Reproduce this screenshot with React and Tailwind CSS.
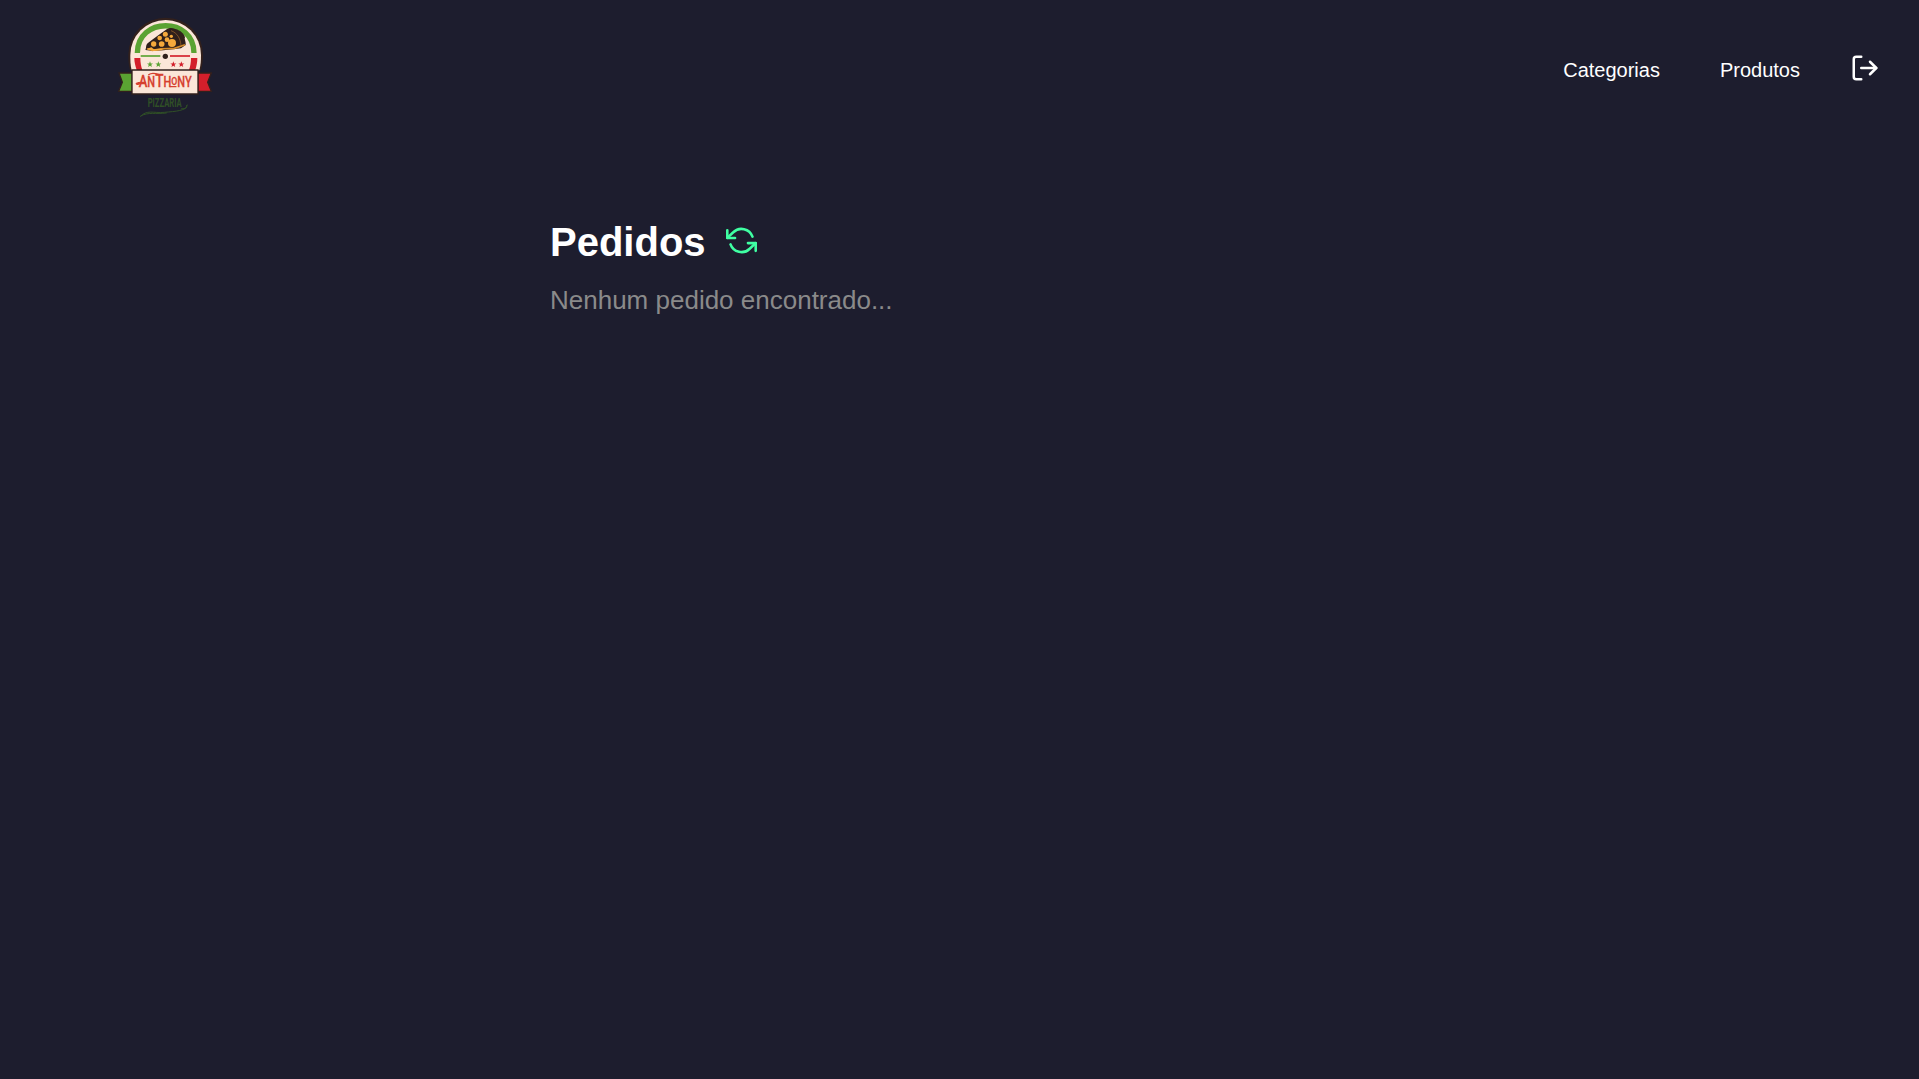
import { FiLogOut, FiRefreshCcw } from "react-icons/fi";

const STAR = "M0-9 2.4-2.8 9-2.6 3.8 1.5 5.6 8 0 4.2-5.6 8-3.8 1.5-9-2.6-2.4-2.8Z";

function Star({ x, y, className }) {
  return <path d={STAR} transform={`translate(${x} ${y})`} className={className} />;
}

function Logo() {
  return (
    <svg viewBox="0 0 330 345" className="h-[115px] w-[110px]" role="img" aria-label="Anthony Pizzaria">
      <path d="M60 181C56 165 55 153 55 134a112 111 0 0 1 224 0c0 19-2 31-6 47Z" className="fill-[#32201c]" />
      <path d="M65 181C61 165 61 153 61 135a106 105 0 0 1 212 0c0 18-1 30-5 46Z" className="fill-[#fbe6d8]" />
      <path d="M82 129C82 20 252 20 252 129" fill="none" strokeWidth="16" className="stroke-[#5aa332]" />
      <path d="M73 144H91C91 158 93 169 97 180H80C76 168 73 157 73 144Z" className="fill-[#d31f2b]" />
      <path d="M243 144H262C262 157 260 168 256 180H237C241 169 243 158 243 144Z" className="fill-[#d31f2b]" />

      <path d="M106 120C110 114 106 107 113 100C127 88 147 74 167 60C177 53 185 53 196 57C212 61 223 72 225 82C222 87 228 93 227 105L213 115L190 118L160 121L131 123Z" className="fill-[#30201b]" />
      <path d="M112 116 127 121 158 116 193 115 225 104" fill="none" strokeWidth="5" className="stroke-[#d58c2b]" />
      <path d="M116 108C132 94 153 80 180 62C193 75 203 91 205 107L160 113Z" className="fill-[#30201b]" />
      <g className="fill-[#f5a93c]">
        <circle cx="166" cy="73" r="7.5" />
        <circle cx="149" cy="84" r="7" />
        <circle cx="171" cy="89" r="7" />
        <circle cx="186" cy="99" r="12" />
        <circle cx="155" cy="102" r="8.5" />
        <circle cx="131" cy="102" r="8" />
        <circle cx="184" cy="79" r="5" />
        <path d="m109 117 15-5 8 6 20-2 10 4-30 3Z" />
      </g>
      <path d="M183 62C202 69 211 85 213 106" fill="none" strokeWidth="2" className="stroke-[#a56a2c]" />

      <path d="M92 138H151" strokeWidth="5" className="stroke-[#5aa332]" />
      <path d="M180 138H240" strokeWidth="5" className="stroke-[#d31f2b]" />
      <circle cx="166" cy="139" r="8" className="fill-[#30201b]" />
      <Star x={120} y={163} className="fill-[#5aa332]" />
      <Star x={145} y={163} className="fill-[#5aa332]" />
      <Star x={190} y={163} className="fill-[#d31f2b]" />
      <Star x={214} y={163} className="fill-[#d31f2b]" />

      <path d="M67 189H27L37 217L26 244H67Z" strokeWidth="4" className="fill-[#5aa332] stroke-[#32201c]" />
      <path d="M263 189H304L293 217L304 244H263Z" strokeWidth="4" className="fill-[#d31f2b] stroke-[#32201c]" />
      <path d="M66 180H264V252H66Z" strokeWidth="4" className="fill-[#fbe6d8] stroke-[#32201c]" />

      <text x="86" y="231" textLength="159" lengthAdjust="spacingAndGlyphs" strokeWidth="0.8" className="fill-[#d6402f] stroke-[#d6402f] font-['Roboto',sans-serif] font-medium">
        <tspan fontSize="51">A</tspan>
        <tspan fontSize="43">N</tspan>
        <tspan fontSize="53">T</tspan>
        <tspan fontSize="43">H</tspan>
        <tspan fontSize="34" dy="-7">O</tspan>
        <tspan fontSize="43" dy="7">NY</tspan>
      </text>
      <path d="M181 230H198M80 220C84 216 94 217 106 217M116 194C125 187 137 190 147 194M79 221C81 225 86 222 89 220" fill="none" strokeWidth="4" strokeLinecap="round" className="stroke-[#d6402f]" />

      <text x="113" y="291" fontSize="36" textLength="102" lengthAdjust="spacingAndGlyphs" className="fill-[#305026] font-['Roboto',sans-serif] font-bold">PIZZARIA</text>
      <path d="M92 319C110 298 130 310 163 307C197 304 229 303 232 285M92 318C115 305 137 313 169 309M215 296C229 299 231 292 230 287" fill="none" strokeWidth="3" strokeLinecap="round" className="stroke-[#305026]" />
    </svg>
  );
}

export default function App() {
  return (
    <div className="min-h-screen bg-[#1d1d2e] font-['Liberation_Sans',Arial,sans-serif] text-white">
      <header className="flex h-[135px] items-center justify-between pr-[39px] pl-[110px]">
        <Logo />
        <nav className="flex items-center text-[20px]">
          <a href="#categorias" className="mr-[60px] pt-1">Categorias</a>
          <a href="#produtos" className="mr-[50px] pt-1">Produtos</a>
          <button aria-label="Sair">
            <FiLogOut size={30} />
          </button>
        </nav>
      </header>
      <main className="mx-auto w-[819px] pt-[84px]">
        <div className="flex items-center">
          <h1 className="text-[40px] leading-[46px] font-bold">Pedidos</h1>
          <button aria-label="Atualizar pedidos" className="ml-5 pb-1 text-[#3fffa3]">
            <FiRefreshCcw size={31} />
          </button>
        </div>
        <p className="mt-5 text-[26px] leading-[30px] text-[#8a8a8a]">Nenhum pedido encontrado...</p>
      </main>
    </div>
  );
}
